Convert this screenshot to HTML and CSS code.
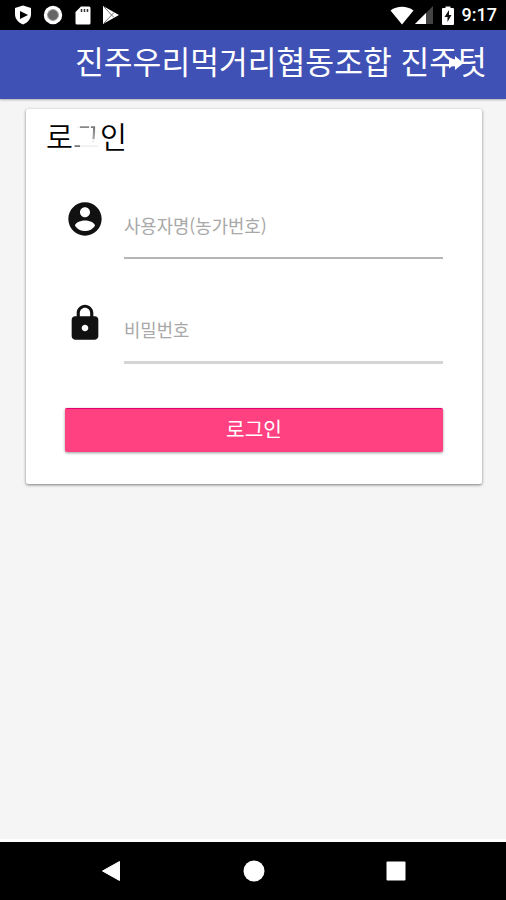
FILE: index.html
```html
<!DOCTYPE html>
<html lang="ko">
  <head>
    <meta charset="UTF-8">
    <meta name="viewport" content="width=device-width, initial-scale=1.0">
    <title>로그인</title>
    <link rel="stylesheet" href="styles.css">
  </head>
  <body>
    <div class="status-bar">
      <div class="status-left">
        <svg width="18" height="20" viewBox="0 0 18 20"><path d="M9 0.5 L17 3 V9 C17 14.5 13 18 9 19.5 C5 18 1 14.5 1 9 V3 Z" fill="#fff"/><path d="M6 6 L14 10 L6 14 Z" fill="#000"/></svg>
        <svg width="20" height="20" viewBox="0 0 20 20"><circle cx="10" cy="10" r="9.2" fill="#fff"/><circle cx="10" cy="10" r="5.4" fill="#666" stroke="#999" stroke-width="1"/></svg>
        <svg width="16" height="19" viewBox="0 0 16 19"><path d="M6 0.5 H14 Q15.5 0.5 15.5 2 V17 Q15.5 18.5 14 18.5 H2 Q0.5 18.5 0.5 17 V6 Z" fill="#fff"/><path d="M6.5 3v3M9.5 3v3M12.500 3v3" stroke="#333" stroke-width="1.5"/></svg>
        <svg width="18" height="20" viewBox="0 0 18 20"><path d="M1 1 L17 10 L1 19 Z" fill="#fff"/><path d="M2 2 L12 12.500 M2 18 L12 7.500" stroke="#777" stroke-width="1"/></svg>
      </div>
      <div class="status-right">
        <svg width="24" height="19" viewBox="0 0 24 19"><path d="M12 18.500 L0.500 4.500 C7 -0.500 17 -0.500 23.500 4.500 Z" fill="#fff"/></svg>
        <svg class="signal" width="18" height="18" viewBox="0 0 18 18"><path d="M0 18 L18 0 V18 Z" fill="#444"/><path d="M0 18 L11 7 V18 Z" fill="#fff"/></svg>
        <svg class="battery" width="12" height="19" viewBox="0 0 12 19"><path d="M3.500 0.500 H8.500 V2 H11 Q12 2 12 3 V18 Q12 19 11 19 H1 Q0 19 0 18 V3 Q0 2 1 2 H3.500 Z" fill="#fff"/><path d="M7 4 L2.500 11 H5.500 V16 L9.500 9 H7 Z" fill="#111"/></svg>
        <span class="clock">9:17</span>
      </div>
    </div>
    <div class="header">
      <h1>진주우리먹거리협동조합 진주텃</h1>
      <svg class="forward" width="16" height="14" viewBox="0 0 16 14"><path d="M0 1.500 L7 7 L0 12.500 Z M6 0 L14.500 7 L6 14 Z M0 4 H8 V10 H0 Z" fill="#fff"/></svg>
    </div>
    <div class="content">
      <form class="card">
        <h2>로<span class="faded">그</span>인</h2>
        <div class="form-group">
          <svg width="40" height="40" viewBox="0 0 24 24"><path d="M12 2C6.480 2 2 6.480 2 12s4.480 10 10 10 10-4.480 10-10S17.520 2 12 2zm0 3c1.660 0 3 1.340 3 3s-1.340 3-3 3-3-1.340-3-3 1.340-3 3-3zm0 14.200c-2.500 0-4.710-1.280-6-3.220.030-1.990 4-3.080 6-3.080 1.990 0 5.970 1.090 6 3.080-1.290 1.940-3.500 3.220-6 3.220z" fill="#111"/></svg>
          <input type="text" placeholder="사용자명(농가번호)">
        </div>
        <div class="form-group password">
          <svg width="40" height="40" viewBox="0 0 24 24"><path d="M18 8h-1V6c0-2.760-2.240-5-5-5S7 3.240 7 6v2H6c-1.100 0-2 .9-2 2v10c0 1.100.9 2 2 2h12c1.100 0 2-.9 2-2V10c0-1.100-.9-2-2-2zm-6 9c-1.100 0-2-.9-2-2s.9-2 2-2 2 .9 2 2-.9 2-2 2zm3.100-9H8.900V6c0-1.710 1.390-3.100 3.100-3.100 1.710 0 3.100 1.390 3.100 3.100v2z" fill="#111"/></svg>
          <input type="password" placeholder="비밀번호">
        </div>
        <button type="button" class="btn-primary">로그인</button>
      </form>
    </div>
    <div class="nav-bar">
      <svg width="20" height="22" viewBox="0 0 20 22"><path d="M18.500 1.500 V20.500 L1.500 11 Z" fill="#fff" stroke="#fff" stroke-linejoin="round"/></svg>
      <svg width="22" height="22" viewBox="0 0 22 22"><circle cx="11" cy="11" r="10.500" fill="#fff"/></svg>
      <svg width="20" height="20" viewBox="0 0 20 20"><rect x="0.500" y="0.500" width="19" height="19" rx="1" fill="#fff"/></svg>
    </div>
  </body>
</html>
```
FILE: styles.css
```css
:root {
  --background: #f5f5f5;
  --card: #fff;
  --primary: #3f51b5;
  --accent: #ff4081;
  --muted: #a8a8a8;
}

* {
  box-sizing: border-box;
}

body {
  margin: 0;
  height: 900px;
  display: flex;
  flex-direction: column;
  background-color: var(--background);
  font-family: "Noto Sans CJK KR", sans-serif;
  overflow: hidden;
}

svg {
  display: block;
  flex: none;
}

.status-bar {
  height: 30px;
  flex: none;
  display: flex;
  justify-content: space-between;
  align-items: center;
  padding: 0 9px 0 13.5px;
  background-color: #000;
}

.status-left,
.status-right {
  display: flex;
  align-items: center;
}

.status-left {
  gap: 11.5px;
}

.signal {
  margin-left: 1px;
}

.battery {
  margin-left: 9px;
}

.clock {
  margin-left: 8px;
  color: #fff;
  font-family: Roboto, sans-serif;
  font-size: 18px;
  font-weight: 500;
  line-height: 32px;
}

.header {
  position: relative;
  height: 69px;
  flex: none;
  padding-left: 75px;
  background-color: var(--primary);
  box-shadow: 0 1px 2px rgba(0, 0, 0, 0.3);
}

.header h1 {
  margin: 0;
  color: #fff;
  font-size: 31.3px;
  font-weight: 400;
  line-height: 62px;
  white-space: nowrap;
}

/* sits on top of the long title */
.forward {
  position: absolute;
  top: 26px;
  right: 41px;
}

.content {
  flex: 1;
  padding: 10px 24px 0 26px;
  border-bottom: 3px solid #fff;
}

.card {
  height: 375px;
  padding: 0 39px;
  border-radius: 2px;
  background-color: var(--card);
  box-shadow: 0 1px 3px rgba(0, 0, 0, 0.5);
}

.card h2 {
  margin: 0 0 0 -19px;
  color: #000;
  font-size: 29.3px;
  font-weight: 350;
  line-height: 53px;
}

/* only pieces of this letter show */
.faded {
  display: inline-block;
  vertical-align: top;
  color: transparent;
  background:
    linear-gradient(#888, #888) 7px 14px / 9px 8px no-repeat,
    linear-gradient(#666, #aaa) 18px 14px / 6px 16px no-repeat,
    linear-gradient(#777, #777) 0 32px / 7px 10px no-repeat,
    #f0f0f0;
  background-clip: text;
  -webkit-background-clip: text;
}

.form-group {
  display: flex;
  height: 62px;
  margin-top: 36px;
}

.form-group.password {
  margin-top: 42px;
}

.form-group svg {
  margin-top: 1px;
}

.form-group input {
  flex: 1;
  min-width: 0;
  height: 61px;
  margin-left: 19px;
  padding: 0 0 5px;
  border: none;
  border-bottom: 2px solid #b5b5b5;
  background: none;
  font-family: inherit;
  font-size: 17.75px;
}

.form-group.password input {
  height: 62px;
  border-bottom: 3px solid #d5d5d5;
}

input::placeholder {
  color: var(--muted);
}

.btn-primary {
  display: block;
  width: 100%;
  height: 44px;
  margin-top: 44px;
  padding: 0 0 5px;
  border: none;
  border-top: 1px solid #e6006f;
  border-radius: 2px;
  background-color: var(--accent);
  color: #fff;
  font-family: inherit;
  font-size: 20.3px;
  box-shadow: 0 1px 3px rgba(0, 0, 0, 0.4);
}

.nav-bar {
  height: 58px;
  flex: none;
  display: flex;
  justify-content: space-between;
  align-items: center;
  padding: 0 100px 0 101px;
  background-color: #000;
}
```
